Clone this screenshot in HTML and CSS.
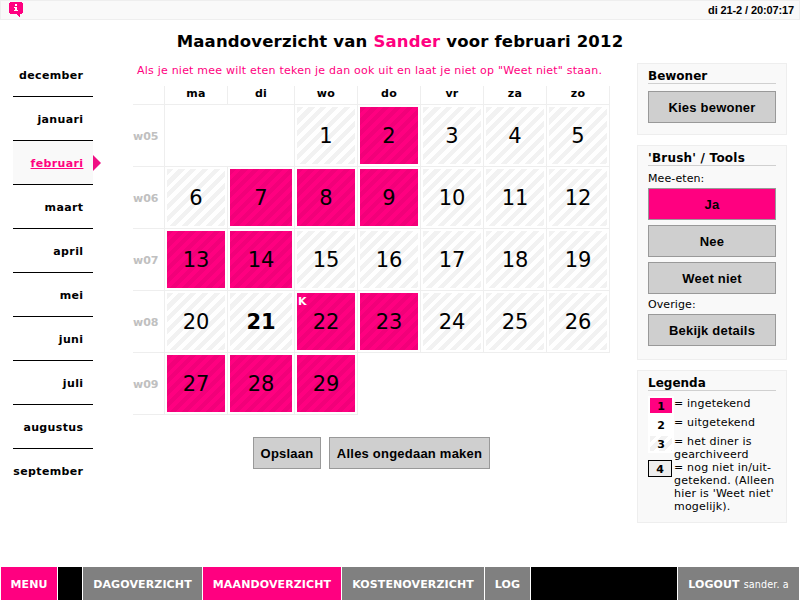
FILE: index.html
```html
<!DOCTYPE html>
<html lang="nl">
<head>
<meta charset="utf-8">
<title>Maandoverzicht</title>
<link rel="stylesheet" href="styles.css">
</head>
<body>
<header class="topbar">
  <svg class="info" width="14" height="15" viewBox="0 0 14 15" shape-rendering="crispEdges" aria-hidden="true">
    <path fill="#ff0080" d="M1 0h12v1h1v10h-1v1h-2v3h-1v-1h-1v-1h-1v-1h-7v-1h-1v-10h1z"/>
    <path fill="#fff" d="M6 2h2v2h-2zM5 5h3v3h1v1h-4v-1h1v-2h-1z"/>
  </svg>
  <span class="clock">di 21-2 / 20:07:17</span>
</header>
<h1>Maandoverzicht van <em>Sander</em> voor februari 2012</h1>
<div class="page">
  <nav class="months">
    <a>december</a><a>januari</a><a class="current"><span>februari</span></a><a>maart</a><a>april</a><a>mei</a><a>juni</a><a>juli</a><a>augustus</a><a>september</a>
  </nav>
  <main>
    <p class="notice">Als je niet mee wilt eten teken je dan ook uit en laat je niet op "Weet niet" staan.</p>
    <div class="calendar">
      <b></b><b>ma</b><b>di</b><b>wo</b><b>do</b><b>vr</b><b>za</b><b>zo</b>
      <i>w05</i><div class="blank"></div><div><span>1</span></div><div class="in"><span>2</span></div><div><span>3</span></div><div><span>4</span></div><div><span>5</span></div>
      <i>w06</i><div><span>6</span></div><div class="in"><span>7</span></div><div class="in"><span>8</span></div><div class="in"><span>9</span></div><div><span>10</span></div><div><span>11</span></div><div><span>12</span></div>
      <i>w07</i><div class="in"><span>13</span></div><div class="in"><span>14</span></div><div><span>15</span></div><div><span>16</span></div><div><span>17</span></div><div><span>18</span></div><div><span>19</span></div>
      <i>w08</i><div><span>20</span></div><div class="today"><span>21</span></div><div class="in"><span>22<sup>K</sup></span></div><div class="in"><span>23</span></div><div><span>24</span></div><div><span>25</span></div><div><span>26</span></div>
      <i>w09</i><div class="in"><span>27</span></div><div class="in"><span>28</span></div><div class="in"><span>29</span></div>
    </div>
    <div class="actions"><button class="save">Opslaan</button><button class="undo">Alles ongedaan maken</button></div>
  </main>
  <aside>
    <section class="resident">
      <h2>Bewoner</h2>
      <button>Kies bewoner</button>
    </section>
    <section class="tools">
      <h2>'Brush' / Tools</h2>
      <p>Mee-eten:</p>
      <button class="active">Ja</button>
      <button>Nee</button>
      <button>Weet niet</button>
      <p>Overige:</p>
      <button>Bekijk details</button>
    </section>
    <section class="legend">
      <h2>Legenda</h2>
      <dl>
        <dt class="yes"><span>1</span></dt><dd>= ingetekend</dd>
        <dt><span>2</span></dt><dd>= uitgetekend</dd>
        <dt class="archived"><span>3</span></dt><dd>= het diner is<br>gearchiveerd</dd>
        <dt class="open"><span>4</span></dt><dd>= nog niet in/uit-<br>getekend. (Alleen<br>hier is 'Weet niet'<br>mogelijk).</dd>
      </dl>
    </section>
  </aside>
</div>
<footer>
  <a class="on menu">MENU</a>
  <span class="gap"></span>
  <a class="dag">DAGOVERZICHT</a>
  <a class="on maand">MAANDOVERZICHT</a>
  <a class="kosten">KOSTENOVERZICHT</a>
  <a class="log">LOG</a>
  <span class="fill"></span>
  <a class="logout">LOGOUT <small>sander. a</small></a>
</footer>
</body>
</html>
```
FILE: styles.css
```css
* { box-sizing: border-box; }
body {
  margin: 0;
  height: 600px;
  display: flex;
  flex-direction: column;
  overflow: hidden;
  background: #fff;
  color: #000;
  font: 11px/13px "DejaVu Sans", Verdana, sans-serif;
}
.topbar {
  height: 20px;
  display: flex;
  justify-content: space-between;
  align-items: flex-start;
  padding: 1px 5px 0 8px;
  border: 1px solid #eee;
  background: #f9f9f9;
}
.clock {
  font: bold 11px/17px "Liberation Sans", Arial, sans-serif;
  letter-spacing: -.12px;
}
h1 {
  margin: 11px 0 0;
  height: 22px;
  font-size: 16.5px;
  line-height: 21px;
  letter-spacing: .17px;
  text-align: center;
  white-space: nowrap;
}
h1 em { font-style: normal; color: #ff0080; }
.page { display: flex; height: 514px; }
.months { width: 80px; margin-left: 13px; }
.months a {
  position: relative;
  display: flex;
  justify-content: flex-end;
  align-items: center;
  height: 44px;
  padding: 1px 9.6px 0 0;
  border-bottom: 1px solid #000;
  font-weight: bold;
  letter-spacing: .36px;
}
.months a:last-child { height: 43px; border: 0; }
.months .current { color: #ff0080; background: #f9f9f9; }
.current span { text-decoration: underline; }
.months .current::after {
  content: "";
  position: absolute;
  left: 80px;
  top: 14px;
  border: solid transparent;
  border-width: 8px 0 8px 8px;
  border-left-color: #f00f84;
}
main { width: 477px; margin-left: 40px; padding-top: 11px; }
.notice {
  margin: 0 0 0 4px;
  height: 22px;
  color: #ff0080;
  letter-spacing: .22px;
  white-space: nowrap;
}
.calendar {
  display: grid;
  grid-template-columns: 32px 63px 67px repeat(5, 63px);
  grid-template-rows: 19px repeat(5, 62px);
}
.calendar b, .calendar i, .calendar div {
  border: solid #eee;
  border-width: 0 1px 1px 0;
}
.calendar b { text-align: center; line-height: 15px; letter-spacing: .3px; }
.calendar i {
  font-style: normal;
  font-weight: bold;
  color: #c0c0c0;
  display: flex;
  align-items: center;
  padding-top: 2px;
}
.calendar div { padding: 2px; font-size: 21px; }
.calendar .blank { grid-column: span 2; }
.calendar span {
  position: relative;
  display: flex;
  justify-content: center;
  align-items: center;
  height: 57px;
  padding-top: 2px;
}
.calendar div span, .archived span {
  background-image: repeating-linear-gradient(135deg, rgba(0,0,0,.05) 0 4.243px, transparent 4.243px 8.485px);
}
.calendar .in span { background-color: #ff0080; }
.today { font-weight: bold; }
.calendar sup {
  position: absolute;
  left: 1px;
  top: 2px;
  font: bold 11px/13px "DejaVu Sans", sans-serif;
  color: #fff;
}
button {
  display: block;
  height: 32px;
  padding: 0;
  border: 1px solid #999;
  border-radius: 0;
  background: #cfcfcf;
  color: #000;
  font: bold 13px "Liberation Sans", Arial, sans-serif;
  letter-spacing: .22px;
  white-space: nowrap;
}
.actions { display: flex; gap: 8px; margin: 22px 0 0 120px; }
.save { width: 68px; }
.undo { width: 161px; }
aside { width: 150px; margin: 10px 0 0 27px; }
section {
  height: 72px;
  margin-bottom: 10px;
  padding: 5px 10px 0;
  border: 1px solid #eee;
  background: #f9f9f9;
}
section h2 {
  margin: 0 0 7px;
  height: 15px;
  border-bottom: 1px solid #d0d0d0;
  font-size: 12px;
  line-height: 15px;
  white-space: nowrap;
}
section button { width: 128px; margin-bottom: 5px; }
section p { margin: -1px 0 3px; letter-spacing: .1px; }
section .active { background: #ff0080; }
.tools { height: 215px; }
.tools h2 { letter-spacing: .22px; }
.tools p { height: 13px; }
.tools button + p { margin: -1px 0 3px; }
.legend { height: 153px; }
dl {
  display: grid;
  grid-template-columns: 26px 1fr;
  grid-template-rows: 19px 19px 26px 52px;
  margin: -2px 0 0;
  white-space: nowrap;
}
dt { height: 19px; padding: 2px; background: #fff; font-weight: bold; }
dt span { display: block; height: 15px; line-height: 17px; text-align: center; }
dt.yes span { background: #ff0080; }
dt.open { width: 24px; height: 17px; padding: 0; border: 1px solid #000; background: #eee; }
dd { margin: 1px 0 0; letter-spacing: .2px; }
footer {
  display: flex;
  gap: 1px;
  height: 33px;
  padding: 0 1px;
  background: #fff;
}
footer a, footer span { background: #808080; height: 33px; }
footer a {
  color: #fff;
  font-weight: bold;
  line-height: 35px;
  letter-spacing: .12px;
  text-align: center;
  white-space: nowrap;
}
footer small { font-size: 9.6px; font-weight: normal; }
footer .on { background: #ff0080; }
.menu { width: 56px; }
footer .gap { width: 24px; background: #000; }
.dag { width: 119px; }
.maand { width: 138px; }
.kosten { width: 142px; }
.log { width: 45px; }
footer .fill { flex: 1; background: #000; }
.logout { width: 121px; }
```
